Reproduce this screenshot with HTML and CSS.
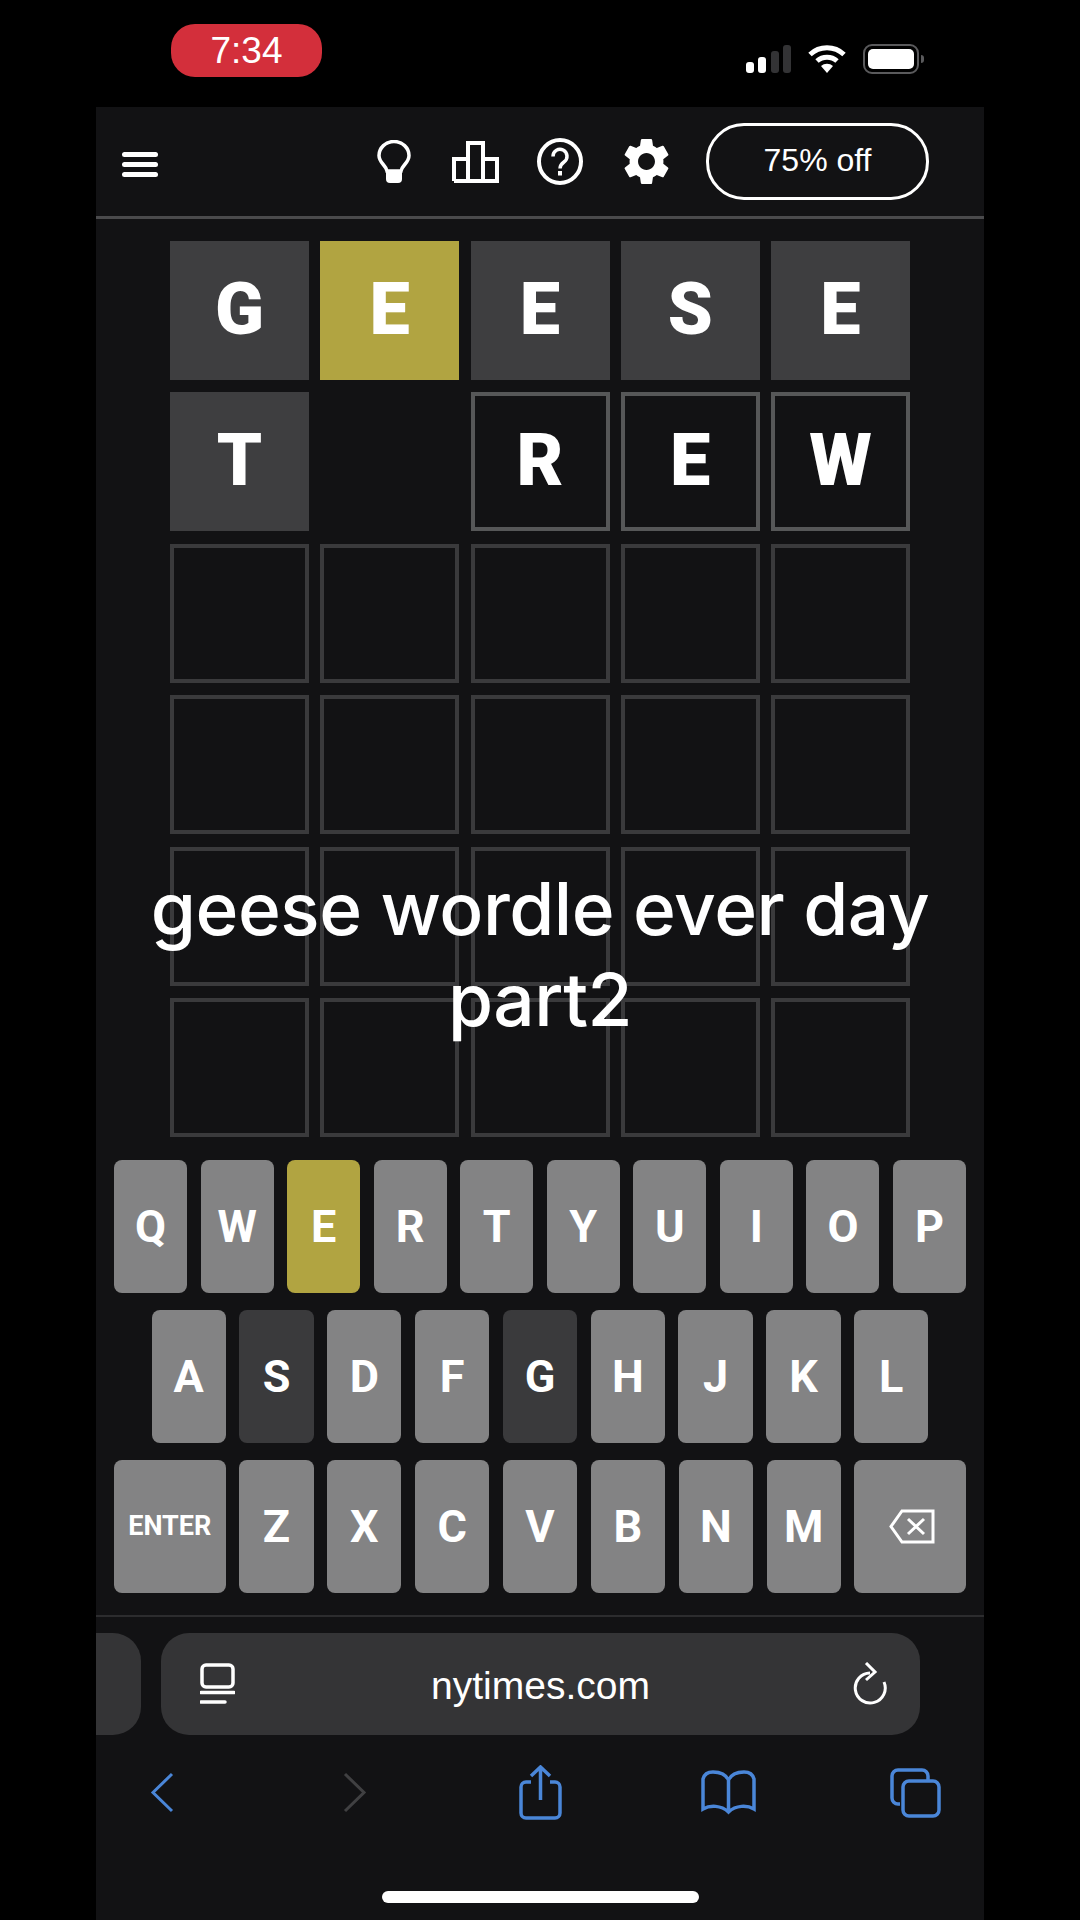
FILE: index.html
```html
<!DOCTYPE html>
<html lang="en">
<head>
    <meta charset="UTF-8">
    <meta name="viewport" content="width=device-width, initial-scale=1.0">
    <title>Wordle</title>
    <link rel="stylesheet" href="styles.css">
</head>
<body>
    <div class="phone">
        <div class="status-bar">
            <div class="time-pill">7:34</div>
            <div class="status-icons">
                <div class="signal">
                    <span class="bar bar-1"></span>
                    <span class="bar bar-2"></span>
                    <span class="bar bar-3"></span>
                    <span class="bar bar-4"></span>
                </div>
                <svg class="wifi" width="38" height="29" viewBox="0 0 38 29">
                    <path d="M2 10.500a25 25 0 0 1 34 0" fill="none" stroke="#fff" stroke-width="5"/>
                    <path d="M9 17a15 15 0 0 1 20 0" fill="none" stroke="#fff" stroke-width="5"/>
                    <path d="M19 29l-6-7a9 9 0 0 1 12 0z" fill="#fff"/>
                </svg>
                <div class="battery">
                    <div class="battery-level"></div>
                </div>
                <div class="battery-nub"></div>
            </div>
        </div>

        <div class="game-header">
            <div class="menu-icon">
                <span></span>
                <span></span>
                <span></span>
            </div>
            <div class="header-right">
                <svg class="icon-bulb" width="34" height="43" viewBox="0 0 34 43">
                    <path d="M10 31C9 25 2 23 2 15.500A15 14 0 0 1 32 15.500C32 23 25 25 24 31z" fill="none" stroke="#fff" stroke-width="3.500"/>
                    <path d="M9 30h16v9a4 4 0 0 1-4 4h-8a4 4 0 0 1-4-4z" fill="#fff"/>
                </svg>
                <svg class="icon-stats" width="47" height="42" viewBox="0 0 47 42">
                    <path d="M2 40V18h14v22M16 40V2h15v38M31 18h14v22H2" fill="none" stroke="#fff" stroke-width="4"/>
                </svg>
                <svg class="icon-help" width="46" height="47" viewBox="0 0 46 47">
                    <ellipse cx="23" cy="23.500" rx="21" ry="21.500" fill="none" stroke="#fff" stroke-width="4"/>
                    <path d="M16 18.500a7 7 0 1 1 11 5.500c-2.500 1.800-4 3-4 6.500" fill="none" stroke="#fff" stroke-width="3.500"/>
                    <rect x="21" y="33" width="4" height="4.500" fill="#fff"/>
                </svg>
                <svg class="icon-gear" width="47" height="47" viewBox="2.500 2 19 20">
                    <path d="M19.140 12.940c.04-.3.06-.61.06-.94 0-.32-.02-.64-.07-.94l2.030-1.580a.49.49 0 0 0 .12-.61l-1.920-3.320a.488.488 0 0 0-.59-.22l-2.390.96c-.5-.38-1.030-.7-1.620-.94l-.36-2.540a.484.484 0 0 0-.48-.41h-3.840c-.24 0-.43.17-.47.41l-.36 2.540c-.59.24-1.130.57-1.620.94l-2.390-.96c-.22-.08-.47 0-.59.22L2.740 8.870c-.12.21-.08.47.12.61l2.030 1.580c-.05.3-.09.63-.09.94s.02.64.07.94l-2.030 1.580a.49.49 0 0 0-.12.61l1.920 3.320c.12.22.37.29.59.22l2.390-.96c.5.38 1.030.7 1.620.94l.36 2.540c.05.24.24.41.48.41h3.840c.24 0 .44-.17.47-.41l.36-2.540c.59-.24 1.130-.56 1.620-.94l2.390.96c.22.08.47 0 .59-.22l1.920-3.320c.12-.22.07-.47-.12-.61l-2.010-1.580zM12 15.600c-1.980 0-3.600-1.620-3.600-3.600s1.620-3.600 3.600-3.600 3.600 1.620 3.600 3.600-1.620 3.600-3.600 3.600z" fill="#fff"/>
                </svg>
                <div class="offer-button">75% off</div>
            </div>
        </div>

        <div class="game-area">
            <div class="board">
                <div class="tile absent">G</div>
                <div class="tile present">E</div>
                <div class="tile absent">E</div>
                <div class="tile absent">S</div>
                <div class="tile absent">E</div>

                <div class="tile absent">T</div>
                <div class="tile blank"></div>
                <div class="tile typed">R</div>
                <div class="tile typed">E</div>
                <div class="tile typed">W</div>

                <div class="tile"></div><div class="tile"></div><div class="tile"></div><div class="tile"></div><div class="tile"></div>
                <div class="tile"></div><div class="tile"></div><div class="tile"></div><div class="tile"></div><div class="tile"></div>
                <div class="tile"></div><div class="tile"></div><div class="tile"></div><div class="tile"></div><div class="tile"></div>
                <div class="tile"></div><div class="tile"></div><div class="tile"></div><div class="tile"></div><div class="tile"></div>
            </div>
            <!-- caption sits on top of the board -->
            <div class="caption">geese wordle ever day<br>part2</div>
        </div>

        <div class="keyboard">
            <div class="key-row">
                <div class="key">Q</div><div class="key">W</div><div class="key key-present">E</div><div class="key">R</div><div class="key">T</div><div class="key">Y</div><div class="key">U</div><div class="key">I</div><div class="key">O</div><div class="key">P</div>
            </div>
            <div class="key-row key-row-middle">
                <div class="key">A</div><div class="key key-absent">S</div><div class="key">D</div><div class="key">F</div><div class="key key-absent">G</div><div class="key">H</div><div class="key">J</div><div class="key">K</div><div class="key">L</div>
            </div>
            <div class="key-row">
                <div class="key key-wide key-enter">ENTER</div><div class="key">Z</div><div class="key">X</div><div class="key">C</div><div class="key">V</div><div class="key">B</div><div class="key">N</div><div class="key">M</div>
                <div class="key key-wide">
                    <svg class="backspace" width="46" height="35" viewBox="0 0 46 35">
                        <path d="M44 2H13L2 17.500 13 33h31z" fill="none" stroke="#fff" stroke-width="3"/>
                        <path d="M19 10l16 15M35 10L19 25" fill="none" stroke="#fff" stroke-width="3"/>
                    </svg>
                </div>
            </div>
        </div>

        <div class="browser-bar">
            <div class="url-row">
                <div class="other-tab"></div>
                <div class="url-field">
                    <svg width="35" height="42" viewBox="0 0 35 42">
                        <rect x="2" y="2" width="31" height="22" rx="4" fill="none" stroke="#fff" stroke-width="3.500"/>
                        <path d="M1 29.500h33" stroke="#fff" stroke-width="3.500" stroke-linecap="round" fill="none"/>
                        <path d="M1 39h24" stroke="#fff" stroke-width="3.500" stroke-linecap="round" fill="none"/>
                    </svg>
                    <span class="url-text">nytimes.com</span>
                    <svg width="34" height="43" viewBox="0 0 34 43">
                        <path d="M31 20A15 15 0 1 1 17 11" fill="none" stroke="#fff" stroke-width="3"/>
                        <path d="M13 1l9 9-9 8" fill="none" stroke="#fff" stroke-width="3"/>
                    </svg>
                </div>
            </div>
            <div class="toolbar">
                <svg class="tool-back" width="24" height="41" viewBox="0 0 24 41">
                    <path d="M22 2L3 20.500 22 39" fill="none" stroke="#4a86d8" stroke-width="3"/>
                </svg>
                <svg class="tool-forward" width="24" height="41" viewBox="0 0 24 41">
                    <path d="M2 2l19 18.500L2 39" fill="none" stroke="#404042" stroke-width="3"/>
                </svg>
                <svg class="tool-share" width="43" height="55" viewBox="0 0 43 55">
                    <path d="M12 17H7a5 5 0 0 0-5 5v26a5 5 0 0 0 5 5h29a5 5 0 0 0 5-5V22a5 5 0 0 0-5-5h-5" fill="none" stroke="#4a86d8" stroke-width="3.500"/>
                    <path d="M21.500 35V3M12 11l9.500-9L31 11" fill="none" stroke="#4a86d8" stroke-width="3.500"/>
                </svg>
                <svg class="tool-book" width="55" height="45" viewBox="0 0 55 45">
                    <path d="M27.500 10C24 3 17 2 12 2 6 2 3 5 2 9v30c7-4 18-4 25.500 3C35 35 46 35 53 39V9c-1-4-4-7-10-7-5 0-12 1-15.500 8zm0 0v32" fill="none" stroke="#4a86d8" stroke-width="3.500"/>
                </svg>
                <svg class="tool-tabs" width="51" height="50" viewBox="0 0 51 50">
                    <path d="M10 36H8a6 6 0 0 1-6-6V8a6 6 0 0 1 6-6h24a6 6 0 0 1 6 6v4" fill="none" stroke="#4a86d8" stroke-width="3.500"/>
                    <rect x="13" y="13" width="36" height="35" rx="6" fill="none" stroke="#4a86d8" stroke-width="3.500"/>
                </svg>
            </div>
            <div class="home-indicator"></div>
        </div>
    </div>
</body>
</html>
```

FILE: styles.css
```css
* {
    box-sizing: border-box;
}
body {
    margin: 0;
    background: #000;
    font-family: "Liberation Sans", Arial, sans-serif;
    color: #fff;
}
.phone {
    width: 888px;
    height: 1920px;
    margin: 0 auto;
    overflow: hidden;
    background: #121214;
}

/* Status bar */
.status-bar {
    height: 107px;
    background: #000;
    display: flex;
    align-items: flex-start;
    padding: 24px 60px 0 75px;
}
.time-pill {
    width: 151px;
    height: 53px;
    border-radius: 24px;
    background: #d32f3b;
    font-size: 37px;
    line-height: 53px;
    text-align: center;
}
.status-icons {
    margin-left: auto;
    margin-top: 20px;
    display: flex;
    align-items: flex-start;
}
.signal {
    display: flex;
    align-items: flex-end;
    gap: 4.4px;
    height: 29px;
    margin-right: 17px;
}
.bar {
    width: 8px;
    border-radius: 3px;
    background: #fff;
}
.bar-1 { height: 11px; }
.bar-2 { height: 16px; }
.bar-3 { height: 22px; background: #333335; }
.bar-4 { height: 28px; background: #333335; }
.wifi {
    margin-right: 17px;
}
.battery {
    width: 56px;
    height: 30px;
    padding: 3px;
    border: 2px solid #5a5a5c;
    border-radius: 9px;
}
.battery-level {
    height: 100%;
    background: #fff;
    border-radius: 5px;
}
.battery-nub {
    width: 3px;
    height: 8px;
    margin: 11px 0 0 2px;
    background: #5a5a5c;
    border-radius: 0 3px 3px 0;
}

/* Game header */
.game-header {
    height: 112px;
    border-bottom: 3px solid #4a4a4c;
    display: flex;
    align-items: center;
    padding: 0 55px 0 26px;
}
.menu-icon {
    width: 36px;
    display: flex;
    flex-direction: column;
    gap: 5px;
    margin-top: 6px;
}
.menu-icon span {
    height: 5px;
    border-radius: 3px;
    background: #fff;
}
.header-right {
    margin-left: auto;
    display: flex;
    align-items: center;
}
.icon-bulb { margin-right: 41px; }
.icon-stats { margin-right: 38px; }
.icon-help { margin-right: 40px; }
.icon-gear { margin-right: 36px; }
.offer-button {
    width: 223px;
    height: 77px;
    border: 3px solid #fff;
    border-radius: 38px;
    font-size: 32px;
    line-height: 68px;
    text-align: center;
}

/* Board */
.game-area {
    position: relative;
    padding: 22px 74px 0;
}
.board {
    display: grid;
    grid-template-columns: repeat(5, 139px);
    grid-auto-rows: 139px;
    column-gap: 11.25px;
    row-gap: 12.4px;
}
.tile {
    display: flex;
    align-items: center;
    justify-content: center;
    padding-bottom: 3px;
    border: 4px solid #3a3a3c;
    font-family: Roboto, "Liberation Sans", sans-serif;
    font-size: 72px;
    font-weight: 900;
}
.tile.absent {
    background: #3e3e40;
    border: 0;
}
.tile.present {
    background: #b1a441;
    border: 0;
}
.tile.blank {
    border: 0;
}
.tile.typed {
    border-color: #565758;
}
.caption {
    position: absolute;
    left: 0;
    right: 0;
    top: 644px;
    font-family: Inter, sans-serif;
    font-size: 73px;
    font-weight: 500;
    letter-spacing: -0.5px;
    line-height: 91px;
    text-align: center;
}

/* Keyboard */
.keyboard {
    margin-top: 23px;
    padding: 0 18px;
    display: flex;
    flex-direction: column;
    gap: 17px;
}
.key-row {
    display: flex;
    gap: 13.5px;
}
.key-row-middle {
    padding: 0 37.5px;
}
.key {
    flex: 1;
    height: 133px;
    display: flex;
    align-items: center;
    justify-content: center;
    border-radius: 8px;
    background: #838384;
    font-family: Roboto, "Liberation Sans", sans-serif;
    font-size: 45px;
    font-weight: 700;
}
.key-wide {
    flex: 1.5;
}
.key-enter {
    font-size: 27px;
}
.key-present {
    background: #b1a441;
}
.key-absent {
    background: #3a3a3c;
}
.backspace {
    margin-left: 4px;
}

/* Safari bars */
.browser-bar {
    margin-top: 22px;
    border-top: 2px solid #2c2c2e;
}
.url-row {
    display: flex;
    gap: 20px;
    padding-top: 16px;
}
.other-tab {
    width: 45px;
    height: 102px;
    background: #343436;
    border-radius: 0 28px 28px 0;
}
.url-field {
    width: 759px;
    height: 102px;
    background: #343436;
    border-radius: 28px;
    display: flex;
    align-items: center;
    justify-content: space-between;
    padding: 0 33px 0 39px;
}
.url-text {
    margin-right: 7px;
    padding-top: 4px;
    font-size: 39px;
}
.toolbar {
    height: 86px;
    margin-top: 15px;
    display: flex;
    align-items: center;
}
.tool-back { margin-left: 54px; }
.tool-forward { margin-left: 169px; }
.tool-share { margin-left: 152px; }
.tool-book { margin-left: 139px; }
.tool-tabs { margin-left: 134px; }
.home-indicator {
    width: 317px;
    height: 12px;
    margin: 55px auto 0;
    border-radius: 6px;
    background: #fff;
}
```
